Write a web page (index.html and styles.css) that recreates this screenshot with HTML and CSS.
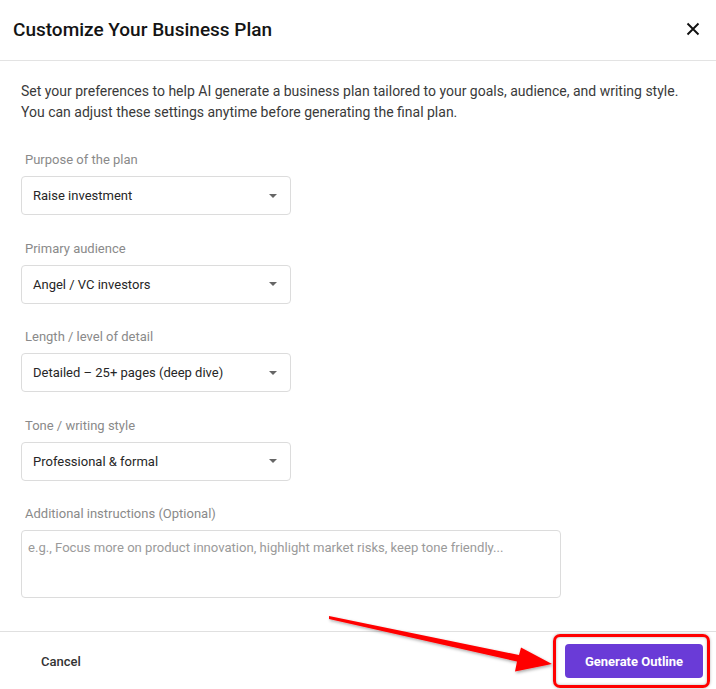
FILE: index.html
```html
<!DOCTYPE html>
<html lang="en">
<head>
<meta charset="utf-8">
<title>Customize Your Business Plan</title>
<link rel="stylesheet" href="styles.css">
</head>
<body>
<div class="modal">
  <header class="modal-header">
    <h1 class="modal-title">Customize Your Business Plan</h1>
    <button class="close-btn" aria-label="Close">
      <svg width="14" height="14" viewBox="0 0 14 14"><path d="M1.5 1.5L12.5 12.5M12.5 1.5L1.5 12.5" stroke="#111" stroke-width="1.9" stroke-linecap="butt"/></svg>
    </button>
  </header>
  <main class="modal-body">
    <p class="intro">Set your preferences to help AI generate a business plan tailored to your goals, audience, and writing style. You can adjust these settings anytime before generating the final plan.</p>
    <div class="field">
      <label class="field-label">Purpose of the plan</label>
      <div class="select"><span>Raise investment</span><span class="caret"></span></div>
    </div>
    <div class="field">
      <label class="field-label">Primary audience</label>
      <div class="select"><span>Angel / VC investors</span><span class="caret"></span></div>
    </div>
    <div class="field">
      <label class="field-label">Length / level of detail</label>
      <div class="select"><span>Detailed – 25+ pages (deep dive)</span><span class="caret"></span></div>
    </div>
    <div class="field">
      <label class="field-label">Tone / writing style</label>
      <div class="select"><span>Professional &amp; formal</span><span class="caret"></span></div>
    </div>
    <div class="field">
      <label class="field-label">Additional instructions (Optional)</label>
      <div class="textarea">e.g., Focus more on product innovation, highlight market risks, keep tone friendly...</div>
    </div>
  </main>
  <footer class="modal-footer">
    <button class="btn-cancel">Cancel</button>
    <button class="btn-primary">Generate Outline</button>
    <div class="highlight-box"></div>
  </footer>
</div>
<svg class="annotation-arrow" width="716" height="689" viewBox="0 0 716 689">
  <defs>
    <filter id="sh" x="-10%" y="-50%" width="120%" height="200%">
      <feDropShadow dx="1" dy="1.5" stdDeviation="1.5" flood-color="#000" flood-opacity="0.35"/>
    </filter>
  </defs>
  <polygon filter="url(#sh)" fill="#ff0000" points="329,616 519,655 521,647.5 552,664 515,671.5 517,661.5 329,619"/>
</svg>
</body>
</html>
```
FILE: styles.css
```css
* { box-sizing: border-box; }
html, body { margin: 0; padding: 0; background: #fff; }
body {
  font-family: Roboto, "Liberation Sans", Arial, sans-serif;
  color: #333;
  width: 716px;
  height: 689px;
  overflow: hidden;
  position: relative;
}
.modal {
  display: flex;
  flex-direction: column;
  height: 689px;
}
.modal-header {
  height: 61px;
  display: flex;
  align-items: center;
  justify-content: space-between;
  padding: 0 16px 2px 13px;
  border-bottom: 1px solid #e3e3e3;
}
.modal-title {
  margin: 0;
  font-size: 19px;
  font-weight: 500;
  color: #141414;
  letter-spacing: 0;
}
.close-btn {
  border: 0;
  background: none;
  padding: 0;
  width: 14px;
  height: 14px;
  display: flex;
  cursor: pointer;
}
.modal-body {
  flex: 1;
  padding: 20px 21px 0 21px;
}
.intro {
  margin: 0 0 28px 0;
  font-size: 14px;
  line-height: 21px;
  color: #3a3a3a;
}
.field {
  margin-bottom: 24.5px;
}
.field-label {
  display: block;
  padding-left: 4px;
  font-size: 13px;
  line-height: 18px;
  color: #8a8a8a;
  margin-bottom: 7px;
}
.select {
  width: 270px;
  height: 39px;
  border: 1px solid #dcdcdc;
  border-radius: 4px;
  display: flex;
  align-items: center;
  justify-content: space-between;
  padding: 0 13px 0 11px;
  font-size: 13px;
  color: #262626;
}
.caret {
  width: 0;
  height: 0;
  border-left: 4.5px solid transparent;
  border-right: 4.5px solid transparent;
  border-top: 4.5px solid #666;
}
.textarea {
  width: 540px;
  height: 68px;
  border: 1px solid #dcdcdc;
  border-radius: 4px;
  padding: 8px 6px;
  font-size: 13.1px;
  line-height: 18px;
  color: #9a9a9a;
}
.modal-footer {
  position: relative;
  height: 58px;
  border-top: 1px solid #e0e0e0;
  display: flex;
  align-items: center;
  justify-content: space-between;
  padding: 1px 13px 0 41px;
}
.btn-cancel {
  border: 0;
  background: none;
  padding: 0;
  font-family: inherit;
  font-size: 13px;
  font-weight: 500;
  color: #333;
}
.btn-primary {
  border: 0;
  background: #6a3bd7;
  color: #fff;
  font-family: inherit;
  font-size: 13px;
  font-weight: 700;
  width: 138px;
  height: 34px;
  border-radius: 4px;
}
.highlight-box {
  position: absolute;
  left: 553px;
  top: 2px;
  width: 157px;
  height: 54px;
  border: 3px solid #ff0000;
  border-radius: 7px;
  box-shadow: inset 0 0 3px rgba(0,0,0,0.3), 0 0 3px rgba(0,0,0,0.3);
  pointer-events: none;
}
.annotation-arrow {
  position: absolute;
  left: 0;
  top: 0;
  pointer-events: none;
}
```
